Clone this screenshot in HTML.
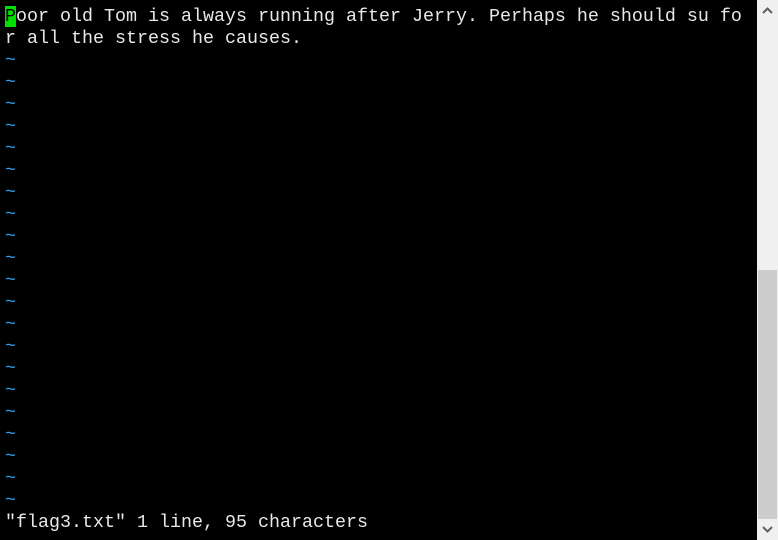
<!DOCTYPE html>
<html><head><meta charset="utf-8"><style>
html,body{margin:0;padding:0;background:#000;width:778px;height:540px;overflow:hidden}
#t{position:absolute;left:5px;top:6px;font-family:"Liberation Mono",monospace;font-size:18.33px;line-height:22px;color:#e8e8e8;white-space:pre}
.c{background:#00e000;color:#000}
.b{color:#2e9be8}
#sb{position:absolute;left:757px;top:0;width:21px;height:540px;background:#f0f0f0}
#th{position:absolute;left:758px;top:270px;width:19px;height:249px;background:#cdcdcd}
</style></head><body>
<div id="t"><span class="c">P</span>oor old Tom is always running after Jerry. Perhaps he should su fo
r all the stress he causes.
<span class="b">~
~
~
~
~
~
~
~
~
~
~
~
~
~
~
~
~
~
~
~
~</span>
"flag3.txt" 1 line, 95 characters</div>
<div id="sb"></div><div id="th"></div>
<svg style="position:absolute;left:757px;top:0" width="21" height="540">
<path d="M6 13 L10.5 8.5 L15 13" stroke="#606060" stroke-width="2" fill="none"/>
<path d="M6 527 L10.5 531.5 L15 527" stroke="#606060" stroke-width="2" fill="none"/>
</svg>
</body></html>
